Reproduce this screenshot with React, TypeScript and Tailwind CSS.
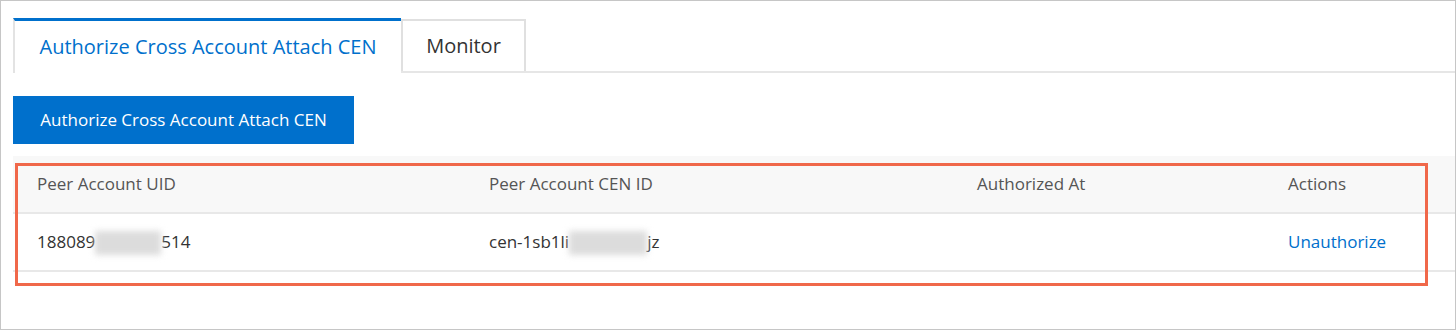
const font = "font-['Segoe_UI','Open_Sans',sans-serif]";

const columns = [
  { label: "Peer Account UID", width: "w-[452px]" },
  { label: "Peer Account CEN ID", width: "w-[488px]" },
  { label: "Authorized At", width: "w-[311px]" },
  { label: "Actions", width: "flex-1" },
];

function Blur({ width }: { width: string }) {
  return <span className={`inline-block h-[24px] ${width} bg-[#dcdcdc] blur-[3px] align-middle`} />;
}

export default function App() {
  return (
    <div className={`h-[330px] w-[1456px] border border-[#c6c6c6] bg-white ${font}`}>
      <div className="pl-[12px] pt-[17px]">
        {/* tabs */}
        <div className="flex items-end border-b-2 border-[#e6e6e6]">
          <div className="-mb-[2px] flex h-[55px] w-[388px] items-center justify-center border-t-[3px] border-l-2 border-[#0070cc] border-l-[#e3e3e3] bg-white text-[20px] text-[#0070cc]">
            Authorize Cross Account Attach CEN
          </div>
          <div className="flex h-[52px] w-[125px] items-center justify-center border-2 border-b-0 border-[#e0e0e0] text-[20px] text-[#333]">
            Monitor
          </div>
        </div>

        <button className="mt-[23px] h-[48px] w-[341px] bg-[#0070cc] text-[17px] text-white">
          Authorize Cross Account Attach CEN
        </button>

        {/* table */}
        <div className="relative mt-[12px]">
          <div className="flex h-[58px] items-center border-b-2 border-[#e8e8e8] bg-[#f8f8f8] text-[17px] text-[#555]">
            {columns.map((c) => (
              <div key={c.label} className={`${c.width} pl-[24px]`}>
                {c.label}
              </div>
            ))}
          </div>
          <div className="flex h-[58px] items-center border-b-2 border-[#e8e8e8] text-[17px] text-[#333]">
            <div className="w-[452px] pl-[24px]">
              188089<Blur width="w-[66px]" />514
            </div>
            <div className="w-[488px] pl-[24px]">
              cen-1sb1li<Blur width="w-[78px]" />jz
            </div>
            <div className="w-[311px] pl-[24px]" />
            <div className="flex-1 pl-[24px] text-[#0070cc]">Unauthorize</div>
          </div>
          {/* annotation */}
          <div className="absolute left-[2px] top-[7px] h-[123px] w-[1413px] border-[3px] border-[#f0684a]" />
        </div>
      </div>
    </div>
  );
}
